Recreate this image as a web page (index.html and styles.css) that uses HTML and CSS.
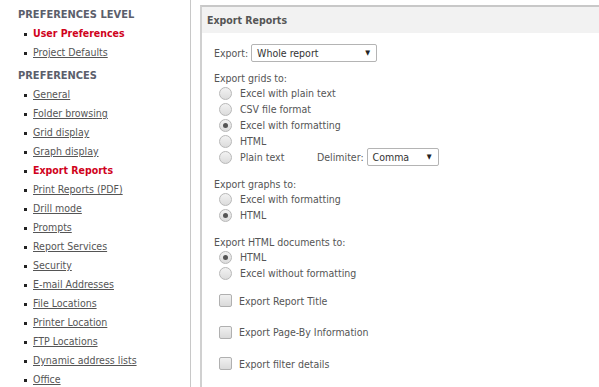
FILE: index.html
```html
<!DOCTYPE html>
<html lang="en">

<head>
    <meta charset="UTF-8">
    <title>Preferences - Export Reports</title>
    <link rel="stylesheet" href="styles.css">
</head>

<body>
    <div class="page">
        <div class="sidebar">
            <div class="group-title">PREFERENCES LEVEL</div>
            <ul class="nav">
                <li class="current">User Preferences</li>
                <li><a href="#">Project Defaults</a></li>
            </ul>
            <div class="group-title">PREFERENCES</div>
            <ul class="nav">
                <li><a href="#">General</a></li>
                <li><a href="#">Folder browsing</a></li>
                <li><a href="#">Grid display</a></li>
                <li><a href="#">Graph display</a></li>
                <li class="current">Export Reports</li>
                <li><a href="#">Print Reports (PDF)</a></li>
                <li><a href="#">Drill mode</a></li>
                <li><a href="#">Prompts</a></li>
                <li><a href="#">Report Services</a></li>
                <li><a href="#">Security</a></li>
                <li><a href="#">E-mail Addresses</a></li>
                <li><a href="#">File Locations</a></li>
                <li><a href="#">Printer Location</a></li>
                <li><a href="#">FTP Locations</a></li>
                <li><a href="#">Dynamic address lists</a></li>
                <li><a href="#">Office</a></li>
            </ul>
        </div>

        <div class="main">
            <div class="panel">
                <div class="panel-head">Export Reports</div>
                <div class="panel-body">
                    <div class="row-export">
                        <span>Export:</span>
                        <div class="select wide">Whole report<span class="arrow">&#9660;</span></div>
                    </div>

                    <div class="section first">
                        <div class="label">Export grids to:</div>
                        <div class="opt"><span class="radio"></span>Excel with plain text</div>
                        <div class="opt"><span class="radio"></span>CSV file format</div>
                        <div class="opt"><span class="radio on"></span>Excel with formatting</div>
                        <div class="opt"><span class="radio"></span>HTML</div>
                        <div class="opt"><span class="radio"></span><span class="plain">Plain text</span>
                            <span class="delim">Delimiter:</span>
                            <div class="select small">Comma<span class="arrow">&#9660;</span></div>
                        </div>
                    </div>

                    <div class="section">
                        <div class="label">Export graphs to:</div>
                        <div class="opt"><span class="radio"></span>Excel with formatting</div>
                        <div class="opt"><span class="radio on"></span>HTML</div>
                    </div>

                    <div class="section">
                        <div class="label">Export HTML documents to:</div>
                        <div class="opt"><span class="radio on"></span>HTML</div>
                        <div class="opt"><span class="radio"></span>Excel without formatting</div>
                    </div>

                    <div class="checks">
                        <div class="check-row"><span class="check"></span>Export Report Title</div>
                        <div class="check-row"><span class="check"></span>Export Page-By Information</div>
                        <div class="check-row"><span class="check"></span>Export filter details</div>
                    </div>
                </div>
            </div>
        </div>
    </div>
</body>

</html>
```

FILE: styles.css
```css
body {
    margin: 0;
    font-family: "DejaVu Sans Condensed", "DejaVu Sans", Tahoma, sans-serif;
    font-size: 10.5px;
    color: #555;
    background: #fff;
}

.page {
    display: flex;
    height: 387px;
    overflow: hidden;
}

/* left navigation */
.sidebar {
    width: 191px;
    border-right: 1px solid #c8c8c8;
    padding: 6px 0 0 18px;
    box-sizing: border-box;
    flex-shrink: 0;
}

.group-title {
    font-weight: bold;
    color: #5b5e6b;
    font-size: 11px;
    height: 18px;
    line-height: 18px;
}

.nav {
    list-style: none;
    margin: 0 0 5px 0;
    padding: 0;
}

.nav li {
    height: 19px;
    line-height: 19px;
    padding-left: 15px;
    position: relative;
}

.nav li::before {
    content: "";
    position: absolute;
    left: 6px;
    top: 9px;
    width: 3px;
    height: 3px;
    background: #222;
}

.nav a {
    color: #555;
}

.nav li.current {
    color: #d0021b;
    font-weight: bold;
}

/* right panel */
.main {
    flex: 1;
    padding: 5px 0 0 9px;
}

.panel {
    border-top: 2px solid #c8c8c8;
    border-left: 2px solid #d0d0d0;
    height: 100%;
}

.panel-head {
    background: #f2f2f2;
    height: 26px;
    line-height: 26px;
    padding-left: 5px;
    font-weight: bold;
    color: #555;
}

.panel-body {
    padding: 11px 0 0 12px;
}

.row-export {
    display: flex;
    align-items: center;
    gap: 3px;
}

.select {
    display: inline-flex;
    align-items: center;
    justify-content: space-between;
    border: 1px solid #b4b4b4;
    border-radius: 2px;
    height: 18px;
    box-sizing: border-box;
    padding: 0 6px 0 5px;
    color: #333;
    background: #fff;
}

.select.wide {
    width: 126px;
}

.select.small {
    width: 72px;
}

.arrow {
    font-size: 7px;
    color: #222;
}

.section {
    margin-top: 12px;
}

.section.first {
    margin-top: 9px;
}

.label {
    height: 14px;
    line-height: 14px;
}

.opt {
    display: flex;
    align-items: center;
    height: 16px;
}

.radio {
    width: 11px;
    height: 11px;
    border: 1px solid #b8b8b8;
    border-radius: 50%;
    background: linear-gradient(#f2f2f2, #dcdcdc);
    margin: 0 8px 0 5px;
    position: relative;
    flex-shrink: 0;
}

.radio.on::after {
    content: "";
    position: absolute;
    left: 3px;
    top: 3px;
    width: 5px;
    height: 5px;
    border-radius: 50%;
    background: #555;
}

.plain {
    width: 77px;
}

.delim {
    margin-right: 3px;
}

.checks {
    margin-top: 4px;
}

.check-row {
    display: flex;
    align-items: center;
    height: 31.5px;
}

.check {
    width: 11px;
    height: 11px;
    border: 1px solid #b0b0b0;
    border-radius: 2px;
    background: linear-gradient(#f0f0f0, #dadada);
    margin: 0 7px 0 5px;
    flex-shrink: 0;
}
```
